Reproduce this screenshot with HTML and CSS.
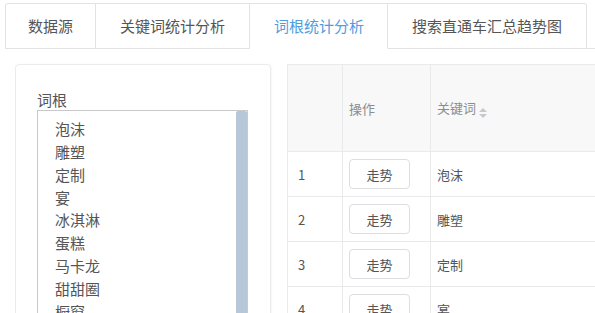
FILE: index.html
```html
<!DOCTYPE html>
<html lang="zh-CN">
  <head>
    <meta charset="utf-8" />
    <meta name="viewport" content="width=device-width, initial-scale=1.0" />
    <title>词根统计分析</title>
    <link rel="stylesheet" href="styles.css">
  </head>
  <body>
    <nav class="tabs">
      <a class="first" href="#">数据源</a>
      <a href="#">关键词统计分析</a>
      <a class="active" href="#">词根统计分析</a>
      <a href="#">搜索直通车汇总趋势图</a>
    </nav>

    <main class="page">
      <!-- left: word root picker -->
      <section class="card">
        <div class="label">词根</div>
        <div class="select">
          <ul class="options">
            <li>泡沫</li>
            <li>雕塑</li>
            <li>定制</li>
            <li>宴</li>
            <li>冰淇淋</li>
            <li>蛋糕</li>
            <li>马卡龙</li>
            <li>甜甜圈</li>
            <li>橱窗</li>
          </ul>
          <div class="scrollbar"><div class="thumb"></div></div>
        </div>
      </section>

      <!-- right: result table -->
      <section class="table-wrap">
        <table class="grid">
          <thead>
            <tr>
              <th class="col-no"></th>
              <th class="col-op">操作</th>
              <th class="col-kw">关键词<span class="sort"><i class="up"></i><i class="down"></i></span></th>
            </tr>
          </thead>
          <tbody>
            <tr>
              <td class="col-no">1</td>
              <td class="col-op"><button class="btn">走势</button></td>
              <td class="col-kw">泡沫</td>
            </tr>
            <tr>
              <td class="col-no">2</td>
              <td class="col-op"><button class="btn">走势</button></td>
              <td class="col-kw">雕塑</td>
            </tr>
            <tr>
              <td class="col-no">3</td>
              <td class="col-op"><button class="btn">走势</button></td>
              <td class="col-kw">定制</td>
            </tr>
            <tr>
              <td class="col-no">4</td>
              <td class="col-op"><button class="btn">走势</button></td>
              <td class="col-kw">宴</td>
            </tr>
          </tbody>
        </table>
      </section>
    </main>
  </body>
</html>
```

FILE: styles.css
```css
body {
  margin: 0;
  font-family: "Noto Sans CJK SC", "Noto Sans", sans-serif;
  color: #555;
  background: #fff;
  overflow: hidden;
}

.tabs {
  display: flex;
  margin: 3px 0 0 5px;
  border-bottom: 1px solid #e3e3e3;
}

.tabs a {
  display: block;
  height: 44px;
  line-height: 44px;
  padding: 0 24px;
  font-size: 15px;
  color: #555;
  text-decoration: none;
  border-top: 1px solid #e3e3e3;
  border-right: 1px solid #e3e3e3;
  margin-bottom: -1px;
  border-bottom: 1px solid #e3e3e3;
}

.tabs a.first {
  padding: 0 22px;
  border-left: 1px solid #e3e3e3;
  border-top-left-radius: 3px;
}

.tabs a:last-child {
  border-top-right-radius: 3px;
}

.tabs a.active {
  padding-right: 23px;
  color: #4d9de0;
  border-bottom-color: #fff;
}

.page {
  display: flex;
  align-items: flex-start;
  gap: 16px;
  padding: 15px 0 0 15px;
}

.card {
  flex: 0 0 256px;
  box-sizing: border-box;
  height: 300px;
  border: 1px solid #ebebeb;
  border-radius: 4px;
  box-shadow: 1px 0 2px rgba(0, 0, 0, 0.04);
  padding: 25px 22px 0 21px;
}

.label {
  font-size: 15px;
  line-height: 20px;
  color: #555;
}

.select {
  display: flex;
  height: 240px;
  border: 1px solid #c9c9c9;
  border-bottom: 0;
}

.options {
  flex: 1;
  list-style: none;
  margin: 0;
  padding: 7px 0 0 17px;
  overflow: hidden;
}

.options li {
  font-size: 15px;
  line-height: 22.85px;
  color: #555;
}

.scrollbar {
  width: 11px;
}

.thumb {
  height: 100%;
  background: #b6c8d8;
  border-radius: 2px 2px 0 0;
}

.table-wrap {
  flex: 1;
  overflow: hidden;
}

.grid {
  border-collapse: collapse;
  width: 340px;
  font-size: 13px;
  color: #555;
}

.grid th,
.grid td {
  border: 1px solid #e9eaec;
  text-align: left;
  padding: 0;
}

.grid th {
  height: 86px;
  background: #f8f8f9;
  font-weight: normal;
  color: #8c8c8c;
}

.grid td {
  height: 44px;
}

.col-no {
  width: 44px;
  padding-left: 10px !important;
}

.col-op {
  width: 81px;
  padding-left: 6px !important;
}

.col-kw {
  padding-left: 6px !important;
}

.btn {
  width: 61px;
  height: 30px;
  border: 1px solid #dcdee2;
  border-radius: 4px;
  background: #fff;
  font-family: inherit;
  font-size: 13px;
  color: #555;
  padding: 0;
  display: block;
}

.sort {
  display: inline-flex;
  flex-direction: column;
  gap: 2px;
  margin-left: 3px;
  vertical-align: 1px;
}

.sort i {
  width: 0;
  height: 0;
  border-left: 4px solid transparent;
  border-right: 4px solid transparent;
}

.sort .up {
  border-bottom: 4px solid #c5c8ce;
}

.sort .down {
  border-top: 4px solid #c5c8ce;
}
```
